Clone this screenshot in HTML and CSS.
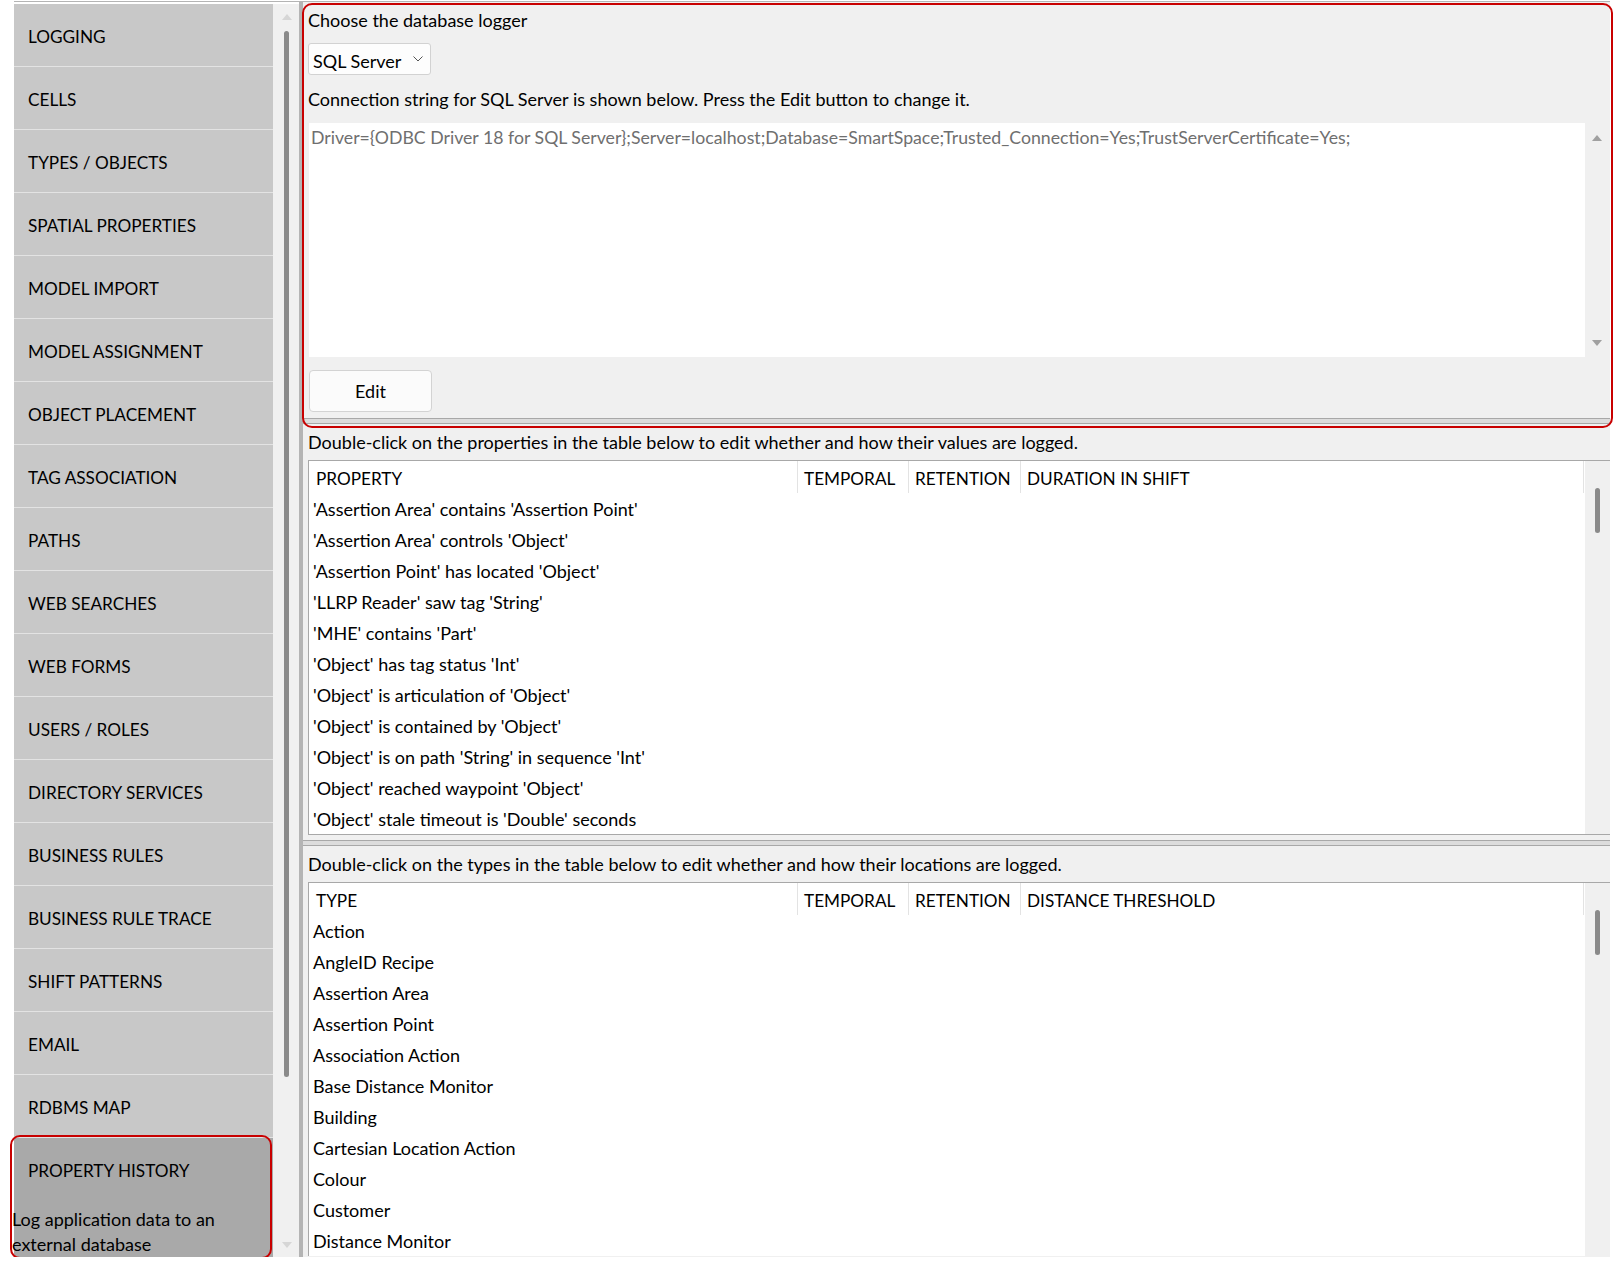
FILE: index.html
```html
<!DOCTYPE html>
<html lang="en">
<head>
  <meta charset="UTF-8" />
  <meta name="viewport" content="width=device-width, initial-scale=1.0" />
  <title>Property History</title>
  <link rel="stylesheet" href="styles.css">
</head>
<body>
  <div class="app">
    <div class="sidebar">
      <div class="nav">
        <div class="nav-item">LOGGING</div>
        <div class="nav-item">CELLS</div>
        <div class="nav-item">TYPES / OBJECTS</div>
        <div class="nav-item">SPATIAL PROPERTIES</div>
        <div class="nav-item">MODEL IMPORT</div>
        <div class="nav-item">MODEL ASSIGNMENT</div>
        <div class="nav-item">OBJECT PLACEMENT</div>
        <div class="nav-item">TAG ASSOCIATION</div>
        <div class="nav-item">PATHS</div>
        <div class="nav-item">WEB SEARCHES</div>
        <div class="nav-item">WEB FORMS</div>
        <div class="nav-item">USERS / ROLES</div>
        <div class="nav-item">DIRECTORY SERVICES</div>
        <div class="nav-item">BUSINESS RULES</div>
        <div class="nav-item">BUSINESS RULE TRACE</div>
        <div class="nav-item">SHIFT PATTERNS</div>
        <div class="nav-item">EMAIL</div>
        <div class="nav-item">RDBMS MAP</div>
        <div class="nav-item selected">
          <div class="nav-title">PROPERTY HISTORY</div>
          <div class="nav-desc">Log application data to an<br>external database</div>
        </div>
      </div>
      <div class="side-scroll">
        <span class="tri tri-up light"></span>
        <span class="side-thumb"></span>
        <span class="tri tri-down light"></span>
      </div>
    </div>

    <div class="splitter-v"></div>

    <div class="main">
      <section class="logger">
        <div class="label">Choose the database logger</div>
        <div class="select">
          <span>SQL Server</span>
          <svg width="10" height="6" viewBox="0 0 10 6"><polyline points="0.5,0.5 5,5 9.5,0.5" fill="none" stroke="#555" stroke-width="1"/></svg>
        </div>
        <div class="label conn">Connection string for SQL Server is shown below. Press the Edit button to change it.</div>
        <div class="textbox">
          <div class="textbox-text">Driver={ODBC Driver 18 for SQL Server};Server=localhost;Database=SmartSpace;Trusted_Connection=Yes;TrustServerCertificate=Yes;</div>
          <div class="textbox-scroll">
            <span class="tri tri-up"></span>
            <span class="tri tri-down"></span>
          </div>
        </div>
        <button class="btn">Edit</button>
        <div class="splitter-h"></div>
      </section>

      <section class="block">
        <div class="label">Double-click on the properties in the table below to edit whether and how their values are logged.</div>
        <div class="table">
          <div class="table-body">
            <div class="table-head">
              <div class="th">PROPERTY</div>
              <div class="th">TEMPORAL</div>
              <div class="th">RETENTION</div>
              <div class="th">DURATION IN SHIFT</div>
              <div class="th"></div>
            </div>
            <div class="tr">'Assertion Area' contains 'Assertion Point'</div>
            <div class="tr">'Assertion Area' controls 'Object'</div>
            <div class="tr">'Assertion Point' has located 'Object'</div>
            <div class="tr">'LLRP Reader' saw tag 'String'</div>
            <div class="tr">'MHE' contains 'Part'</div>
            <div class="tr">'Object' has tag status 'Int'</div>
            <div class="tr">'Object' is articulation of 'Object'</div>
            <div class="tr">'Object' is contained by 'Object'</div>
            <div class="tr">'Object' is on path 'String' in sequence 'Int'</div>
            <div class="tr">'Object' reached waypoint 'Object'</div>
            <div class="tr">'Object' stale timeout is 'Double' seconds</div>
          </div>
          <div class="vscroll"><span class="thumb"></span></div>
        </div>
        <div class="splitter-h"></div>
      </section>

      <section class="block">
        <div class="label">Double-click on the types in the table below to edit whether and how their locations are logged.</div>
        <div class="table open">
          <div class="table-body">
            <div class="table-head">
              <div class="th">TYPE</div>
              <div class="th">TEMPORAL</div>
              <div class="th">RETENTION</div>
              <div class="th">DISTANCE THRESHOLD</div>
              <div class="th"></div>
            </div>
            <div class="tr">Action</div>
            <div class="tr">AngleID Recipe</div>
            <div class="tr">Assertion Area</div>
            <div class="tr">Assertion Point</div>
            <div class="tr">Association Action</div>
            <div class="tr">Base Distance Monitor</div>
            <div class="tr">Building</div>
            <div class="tr">Cartesian Location Action</div>
            <div class="tr">Colour</div>
            <div class="tr">Customer</div>
            <div class="tr">Distance Monitor</div>
          </div>
          <div class="vscroll"><span class="thumb"></span></div>
        </div>
      </section>
    </div>
  </div>
</body>
</html>
```

FILE: styles.css
```css
body {
  margin: 0;
  background-color: #fff;
  color: #000;
  font-family: Lato, "Segoe UI", sans-serif;
  font-size: 18px;
}

.app {
  display: flex;
  align-items: stretch;
  width: 1596px;
  margin: 1px 0 0 14px;
  border-top: 1px solid #b4b4b4;
}

/* left navigation */

.sidebar {
  display: flex;
  margin-top: 2px;
}

.nav {
  width: 259px;
  font-size: 17.2px;
}

.nav-item {
  display: flex;
  align-items: center;
  box-sizing: border-box;
  height: 63px;
  padding: 2px 0 0 14px;
  background-color: #c8c8c8;
  border-bottom: 1px solid #e3e3e3;
}

.nav-item.selected {
  position: relative;
  display: block;
  height: auto;
  padding: 0;
  background-color: #a9a9a9;
  border-bottom: none;
}

.nav-item.selected::after {
  content: "";
  position: absolute;
  top: -3px;
  left: -4px;
  right: 1px;
  bottom: -2px;
  border: 2px solid #c80000;
  border-radius: 10px;
  pointer-events: none;
}

.nav-title {
  display: flex;
  align-items: center;
  box-sizing: border-box;
  height: 63px;
  padding: 2px 0 0 14px;
}

.nav-desc {
  padding-top: 6px;
  margin-left: -2px;
  line-height: 25px;
  font-size: 18px;
}

.side-scroll {
  display: flex;
  flex-direction: column;
  width: 26px;
  background-color: #f0f0f0;
}

.side-thumb {
  width: 5px;
  height: 1046px;
  margin: 11px 0 0 11px;
  border-radius: 3px;
  background-color: #8a8a8a;
}

.tri {
  width: 0;
  height: 0;
  border-left: 5px solid transparent;
  border-right: 5px solid transparent;
}

.tri-up {
  border-bottom: 6px solid #a0a0a0;
}

.tri-down {
  border-top: 6px solid #a0a0a0;
}

.side-scroll .tri {
  margin-left: 9px;
}

.side-scroll .tri-up {
  margin-top: 10px;
  border-bottom-color: #d6d6d6;
}

.side-scroll .tri-down {
  margin-top: auto;
  margin-bottom: 9px;
  border-top-color: #d6d6d6;
}

.splitter-v {
  width: 4px;
  background-color: #b4b4b4;
}

/* main panel */

.main {
  width: 1307px;
  padding-left: 5px;
  box-sizing: border-box;
  background-color: #f0f0f0;
}

.label {
  line-height: 24px;
  white-space: nowrap;
}

.logger {
  position: relative;
  padding-top: 6px;
}

.logger::after {
  content: "";
  position: absolute;
  top: 1px;
  left: -6px;
  right: -3px;
  bottom: -4px;
  border: 2px solid #c80000;
  border-radius: 10px;
  pointer-events: none;
}

.select {
  display: flex;
  align-items: center;
  box-sizing: border-box;
  width: 123px;
  height: 32px;
  margin-top: 11px;
  padding: 3px 7px 0 4px;
  justify-content: space-between;
  background-color: #fdfdfd;
  border: 1px solid #d2d2d2;
  border-radius: 3px;
}

.select svg {
  margin-top: -3px;
}

.label.conn {
  margin-top: 12px;
}

.textbox {
  display: flex;
  height: 234px;
  margin: 12px 0 0 1px;
}

.textbox-text {
  flex: 1;
  padding: 3px 2px;
  background-color: #fff;
  color: #6f6f6f;
  font-size: 17.7px;
  line-height: 24px;
  white-space: nowrap;
}

.textbox-scroll {
  display: flex;
  flex-direction: column;
  width: 25px;
  padding-left: 7px;
  box-sizing: border-box;
}

.textbox-scroll .tri-up {
  margin-top: 12px;
}

.textbox-scroll .tri-down {
  margin-top: auto;
  margin-bottom: 11px;
}

.btn {
  display: block;
  width: 123px;
  height: 42px;
  margin: 13px 0 0 1px;
  background-color: #fbfbfb;
  border: 1px solid #d3d3d3;
  border-radius: 4px;
  font-family: inherit;
  font-size: 18px;
  color: #000;
}

.splitter-h {
  height: 4px;
  margin: 6px 0 0 -5px;
  border-top: 1px solid #a8a8a8;
  border-bottom: 1px solid #a8a8a8;
  background-color: #dcdcdc;
}

.block {
  padding-top: 6px;
}

.block .splitter-h {
  margin-top: 5px;
}

/* tables */

.table {
  display: flex;
  margin-top: 6px;
  border-top: 1px solid #a8a8a8;
  border-left: 1px solid #a8a8a8;
  border-bottom: 1px solid #a8a8a8;
}

.table.open {
  border-bottom: none;
}

.table-body {
  flex: 1;
  background-color: #fff;
}

.table-head {
  display: grid;
  grid-template-columns: 488px 111px 112px 1fr 2px;
  height: 32px;
  font-size: 17.2px;
}

.th {
  display: flex;
  align-items: center;
  padding: 2px 0 0 6px;
  border-left: 1px solid #e3e3e3;
  white-space: nowrap;
}

.th:first-child {
  padding-left: 7px;
  border-left: none;
}

.tr {
  box-sizing: border-box;
  height: 31px;
  padding: 2px 0 0 4px;
  line-height: 29px;
  white-space: nowrap;
}

.vscroll {
  width: 25px;
  background-color: #f0f0f0;
}

.vscroll .thumb {
  display: block;
  width: 5px;
  height: 45px;
  margin: 27px 0 0 10px;
  border-radius: 3px;
  background-color: #8a8a8a;
}
```
